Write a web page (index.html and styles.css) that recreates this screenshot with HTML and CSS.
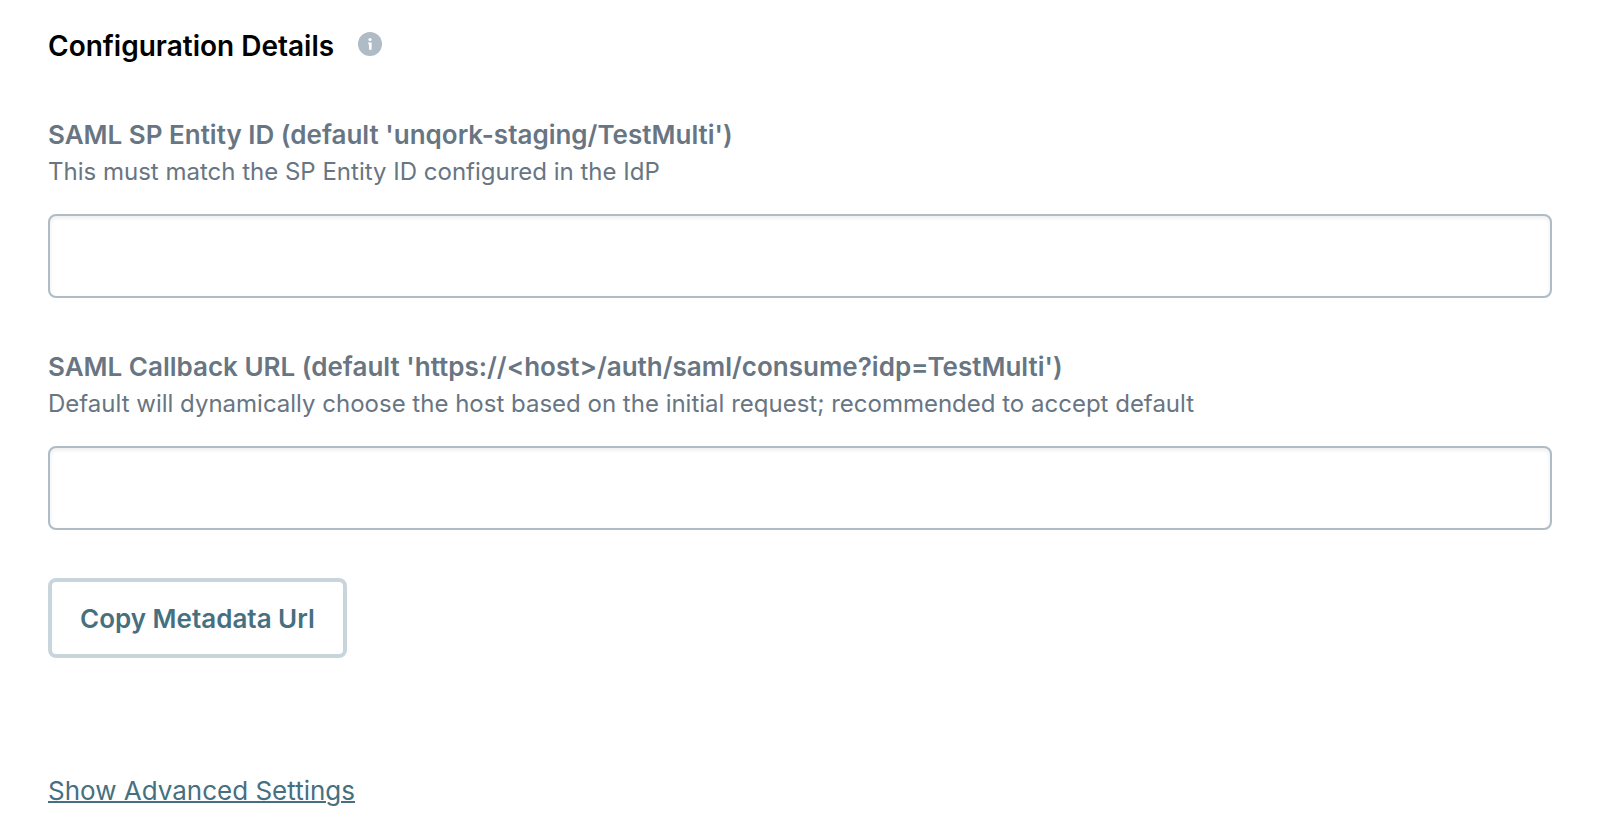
FILE: index.html
```
<!DOCTYPE html>
<html lang="en">
<head>
    <meta charset="UTF-8">
    <meta name="viewport" content="width=device-width, initial-scale=1.0">
    <title>Configuration Details</title>
    <link rel="stylesheet" href="styles.css">
</head>
<body>
    <main>
        <header>
            <h1>Configuration Details</h1>
            <svg class="info-icon" viewBox="0 0 24 24" role="img" aria-label="Info">
                <circle cx="12" cy="12" r="12" fill="#afbbc5"></circle>
                <circle cx="12" cy="7.5" r="1.6" fill="#fff"></circle>
                <path d="M10.2 10.4h3.4v7.4h-2.6v-5.6h-.8z" fill="#fff"></path>
            </svg>
        </header>

        <form>
            <div class="field">
                <label for="entityId">SAML SP Entity ID (default 'unqork-staging/TestMulti')</label>
                <p id="entityIdHelp">This must match the SP Entity ID configured in the IdP</p>
                <input type="text" id="entityId" aria-describedby="entityIdHelp">
            </div>

            <div class="field">
                <label for="callbackUrl">SAML Callback URL (default 'https://&lt;host&gt;/auth/saml/consume?idp=TestMulti')</label>
                <p id="callbackUrlHelp">Default will dynamically choose the host based on the initial request; recommended to accept default</p>
                <input type="text" id="callbackUrl" aria-describedby="callbackUrlHelp">
            </div>

            <button type="button" class="button">Copy Metadata Url</button>
        </form>

        <a href="#" class="advanced-link">Show Advanced Settings</a>
    </main>
</body>
</html>
```
FILE: styles.css
```
* {
    box-sizing: border-box;
}

body {
    font-family: Inter, sans-serif;
    color: #687582;
    margin: 0;
    background-color: #fff;
}

main {
    padding: 28px 46px 24px 48px;
}

header {
    display: flex;
    gap: 24px;
    margin-bottom: 54px;
}

h1 {
    font-size: 28px;
    line-height: 36px;
    font-weight: 600;
    color: #000;
    margin: 0;
}

.info-icon {
    width: 24px;
    height: 24px;
    margin-top: 4px;
}

.field {
    margin-bottom: 48px;
}

.field + .field {
    margin-top: 52px;
}

label {
    display: block;
    font-size: 26px;
    line-height: 34px;
    font-weight: 600;
}

p {
    font-size: 24px;
    line-height: 40px;
    margin: 0 0 22px;
}

input {
    display: block;
    width: 100%;
    height: 84px;
    padding: 0 24px;
    border: 2px solid #afbbc5;
    border-radius: 8px;
    box-shadow: inset 0 2px 4px rgba(0, 0, 0, 0.08);
    font: inherit;
    font-size: 26px;
}

.button {
    display: block;
    height: 80px;
    padding: 0 28px;
    background-color: #fff;
    border: 4px solid #c8d5dc;
    border-radius: 8px;
    color: #46707f;
    font: inherit;
    font-size: 26px;
    font-weight: 600;
}

.advanced-link {
    display: inline-block;
    margin-top: 115px;
    color: #46707f;
    font-size: 26px;
    line-height: 36px;
    text-decoration-thickness: 2px;
}
```
